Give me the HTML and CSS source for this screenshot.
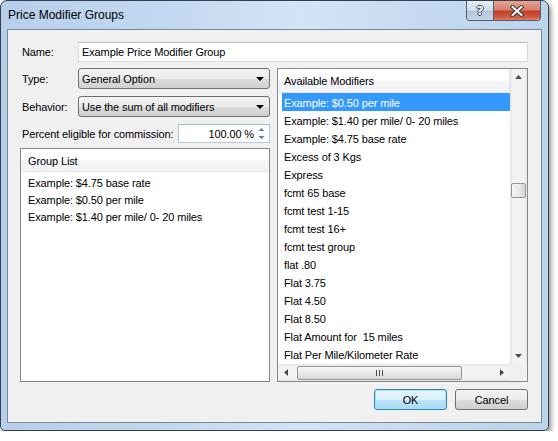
FILE: index.html
```html
<!DOCTYPE html>
<html>
<head>
<meta charset="utf-8">
<title>Price Modifier Groups</title>
<link rel="stylesheet" href="styles.css">
</head>
<body>
<div class="window">
  <div class="titlebar">
    <div class="title">Price Modifier Groups</div>
    <div class="caption-btns">
      <div class="cbtn help"><span class="qmark">?</span></div>
      <div class="cbtn close">
        <svg width="14" height="12" viewBox="0 0 14 12">
          <path d="M2.5 2 L11.5 10 M11.5 2 L2.5 10" stroke="#3b3b3b" stroke-width="4.2" stroke-linecap="square"/>
          <path d="M2.5 2 L11.5 10 M11.5 2 L2.5 10" stroke="#ffffff" stroke-width="2" stroke-linecap="square"/>
        </svg>
      </div>
    </div>
  </div>
  <div class="client">
    <div class="row name-row">
      <span class="lbl name-lbl">Name:</span>
      <div class="textbox name-box">Example Price Modifier Group</div>
    </div>
    <div class="main">
      <div class="left">
        <div class="row combo-row">
          <span class="lbl name-lbl">Type:</span>
          <div class="combo"><span>General Option</span><span class="drop"></span></div>
        </div>
        <div class="row combo-row second">
          <span class="lbl name-lbl">Behavior:</span>
          <div class="combo"><span>Use the sum of all modifiers</span><span class="drop"></span></div>
        </div>
        <div class="row pct-row">
          <span class="lbl pct-lbl">Percent eligible for commission:</span>
          <div class="spin">
            <span class="spin-val">100.00 %</span>
            <svg class="spin-arrows" width="7" height="13" viewBox="0 0 7 13">
              <path d="M0.5 4 L3.5 1 L6.5 4 Z" fill="#5a7ea8"/>
              <path d="M0.5 9 L3.5 12 L6.5 9 Z" fill="#5a7ea8"/>
            </svg>
          </div>
        </div>
        <div class="listbox group">
          <div class="lhead group-head">Group List</div>
          <div class="gitem">Example: $4.75 base rate</div>
          <div class="gitem">Example: $0.50 per mile</div>
          <div class="gitem">Example: $1.40 per mile/ 0- 20 miles</div>
        </div>
      </div>
      <div class="listbox avail">
        <div class="avail-body">
          <div class="lhead avail-head">Available Modifiers</div>
          <div class="aitem selected">Example: $0.50 per mile</div>
          <div class="aitem">Example: $1.40 per mile/ 0- 20 miles</div>
          <div class="aitem">Example: $4.75 base rate</div>
          <div class="aitem">Excess of 3 Kgs</div>
          <div class="aitem">Express</div>
          <div class="aitem">fcmt 65 base</div>
          <div class="aitem">fcmt test 1-15</div>
          <div class="aitem">fcmt test 16+</div>
          <div class="aitem">fcmt test group</div>
          <div class="aitem">flat .80</div>
          <div class="aitem">Flat 3.75</div>
          <div class="aitem">Flat 4.50</div>
          <div class="aitem">Flat 8.50</div>
          <div class="aitem">Flat Amount for  15 miles</div>
          <div class="aitem">Flat Per Mile/Kilometer Rate</div>
        </div>
        <div class="vscroll">
          <svg class="sarrow" width="7" height="4" viewBox="0 0 7 4"><path d="M0 4 L3.5 0 L7 4 Z" fill="#4a4a4a"/></svg>
          <div class="vtrack"><div class="vthumb"></div></div>
          <svg class="sarrow" width="7" height="4" viewBox="0 0 7 4"><path d="M0 0 L3.5 4 L7 0 Z" fill="#4a4a4a"/></svg>
        </div>
        <div class="hscroll">
          <svg class="harrow" width="4" height="7" viewBox="0 0 4 7"><path d="M4 0 L0 3.5 L4 7 Z" fill="#4a4a4a"/></svg>
          <div class="htrack">
            <div class="hthumb">
              <svg width="7" height="6" viewBox="0 0 7 6"><path d="M0.5 0 V6 M3.5 0 V6 M6.5 0 V6" stroke="#505050" stroke-width="1"/></svg>
            </div>
          </div>
          <svg class="harrow" width="4" height="7" viewBox="0 0 4 7"><path d="M0 0 L4 3.5 L0 7 Z" fill="#4a4a4a"/></svg>
        </div>
        <div class="corner"></div>
      </div>
    </div>
    <div class="buttons">
      <div class="btn default">OK</div>
      <div class="btn">Cancel</div>
    </div>
  </div>
</div>
</body>
</html>
```
FILE: styles.css
```css
* { box-sizing: border-box; }

html, body {
  margin: 0;
  padding: 0;
  background: #ffffff;
}

body {
  font-family: "Liberation Sans", Arial, sans-serif;
  font-size: 11px;
  letter-spacing: -0.12px;
  color: #000;
}

.window {
  width: 549px;
  height: 431px;
  border: 1px solid #34404e;
  border-radius: 7px 7px 5px 5px;
  background: linear-gradient(to right, #b6cfea 0%, #c2d8f0 30%, #d3e4f6 55%, #c6dbf1 75%, #bcd3ec 100%);
  box-shadow: 2px 3px 5px rgba(0, 0, 0, 0.45);
  padding: 0 6px 7px 6px;
  display: flex;
  flex-direction: column;
}

.titlebar {
  height: 28px;
  margin: 0 -6px;
  display: flex;
  justify-content: space-between;
}

.title {
  padding: 7px 0 0 7px;
  font-size: 12px;
  letter-spacing: 0;
  color: #000;
}

.caption-btns {
  display: flex;
  margin-right: 7px;
  align-self: flex-start;
  border: 1px solid #4d5f78;
  border-top: none;
  border-radius: 0 0 4px 4px;
  overflow: hidden;
  height: 20px;
}

.cbtn {
  height: 19px;
  display: flex;
  align-items: center;
  justify-content: center;
}

.help {
  width: 27px;
  background: linear-gradient(to bottom, #e3ecf6 0%, #d2e0ef 45%, #b4c6dc 55%, #c3d4e8 100%);
  border-right: 1px solid #4d5f78;
}

.qmark {
  font-family: "DejaVu Sans", sans-serif;
  font-size: 13px;
  font-weight: bold;
  color: #ffffff;
  text-shadow: 1px 0 0 #3a4656, -1px 0 0 #3a4656, 0 1px 0 #3a4656, 0 -1px 0 #3a4656;
  line-height: 1;
}

.close {
  width: 46px;
  background: linear-gradient(to bottom, #e8a495 0%, #d7806d 45%, #c4402b 55%, #d05a3e 85%, #e07f5e 100%);
}

.client {
  flex: 1;
  border: 1px solid #7b8797;
  background: #f0f0f0;
  padding: 12px 13px 12px 12px;
  display: flex;
  flex-direction: column;
}

.row {
  display: flex;
  align-items: center;
}

.name-row {
  height: 20px;
}

.lbl {
  padding-left: 2px;
}

.name-lbl {
  width: 58px;
}

.pct-lbl {
  width: 158px;
}

.textbox {
  background: #fff;
  border: 1px solid #d6dbe1;
  border-top-color: #b9bec6;
  height: 20px;
  line-height: 18px;
  padding-left: 3px;
}

.name-box {
  width: 450px;
}

.main {
  margin-top: 6px;
  height: 314px;
  display: flex;
  gap: 7px;
}

.left {
  width: 250px;
  display: flex;
  flex-direction: column;
}

.combo-row {
  height: 21px;
}

.combo-row.second {
  margin-top: 7px;
}

.combo {
  width: 192px;
  height: 21px;
  border: 1px solid #707070;
  border-radius: 3px;
  background: linear-gradient(to bottom, #f3f3f3 0%, #ebebeb 50%, #dddddd 51%, #cfcfcf 100%);
  display: flex;
  align-items: center;
  justify-content: space-between;
  padding: 0 5px 0 3px;
}

.drop {
  width: 0;
  height: 0;
  border-left: 4px solid transparent;
  border-right: 4px solid transparent;
  border-top: 4px solid #000;
  margin-top: 1px;
}

.pct-row {
  height: 19px;
  margin-top: 7px;
}

.spin {
  width: 92px;
  height: 19px;
  background: #fff;
  border: 1px solid #b5cbe3;
  border-top-color: #9cb8d8;
  display: flex;
  align-items: center;
  justify-content: flex-end;
  padding-right: 4px;
}

.spin-val {
  margin-right: 4px;
}

.spin-arrows {
  display: block;
}

.listbox {
  background: #fff;
  border: 1px solid #828790;
}

.group {
  margin-top: 5px;
  flex: 1;
}

.lhead {
  background: linear-gradient(to bottom, #ffffff 0%, #ffffff 50%, #f4f5f7 51%, #f2f3f5 100%);
  border-bottom: 1px solid #e3e5e8;
}

.group-head {
  height: 23px;
  line-height: 21px;
  padding: 2px 0 0 7px;
}

.gitem {
  height: 17px;
  line-height: 17px;
  padding: 1px 0 0 7px;
}

.group-head + .gitem {
  margin-top: 2px;
}

.avail {
  width: 251px;
  display: grid;
  grid-template-columns: 232px 17px;
  grid-template-rows: 295px 17px;
}

.avail-body {
  overflow: hidden;
}

.avail-head {
  height: 24px;
  line-height: 23px;
  padding: 1px 0 0 6px;
  border-right: 1px solid #e3e5e8;
}

.aitem {
  height: 18px;
  line-height: 18px;
  margin-left: 4px;
  padding: 1px 0 0 2px;
  white-space: pre;
}

.aitem.selected {
  background: #3399ff;
  color: #fff;
}

.vscroll {
  background: linear-gradient(to right, #e6e6e6 0%, #f3f3f3 20%, #f3f3f3 80%, #e6e6e6 100%);
  display: flex;
  flex-direction: column;
  align-items: center;
}

.sarrow {
  display: block;
  margin: 6px 0;
}

.vtrack {
  flex: 1;
  width: 100%;
  position: relative;
}

.vthumb {
  margin: 98px 1px 0 1px;
  height: 15px;
  border: 1px solid #959595;
  border-radius: 2px;
  background: linear-gradient(to right, #f6f6f6 0%, #e9e9e9 50%, #d6d6d6 100%);
}

.hscroll {
  background: linear-gradient(to bottom, #e6e6e6 0%, #f3f3f3 20%, #f3f3f3 80%, #e6e6e6 100%);
  display: flex;
  align-items: center;
}

.harrow {
  display: block;
  margin: 0 6px;
}

.htrack {
  flex: 1;
  height: 100%;
  display: flex;
  align-items: center;
}

.hthumb {
  width: 165px;
  height: 14px;
  margin-left: 3px;
  border: 1px solid #959595;
  border-radius: 2px;
  background: linear-gradient(to bottom, #f6f6f6 0%, #e9e9e9 50%, #d6d6d6 100%);
  display: flex;
  align-items: center;
  justify-content: center;
}

.hthumb svg {
  display: block;
}

.corner {
  background: #f0f0f0;
}

.buttons {
  margin-top: 7px;
  height: 21px;
  display: flex;
  justify-content: flex-end;
  gap: 8px;
}

.btn {
  width: 73px;
  height: 21px;
  border: 1px solid #707070;
  border-radius: 3px;
  background: linear-gradient(to bottom, #f3f3f3 0%, #ebebeb 50%, #dddddd 51%, #cfcfcf 100%);
  display: flex;
  align-items: center;
  justify-content: center;
}

.btn.default {
  border-color: #3c7fb1;
  background: linear-gradient(to bottom, #eaf6fd 0%, #d9f0fc 50%, #bee6fd 51%, #a7d9f5 100%);
  box-shadow: inset 0 0 0 1px #9ee6fa;
}
```
